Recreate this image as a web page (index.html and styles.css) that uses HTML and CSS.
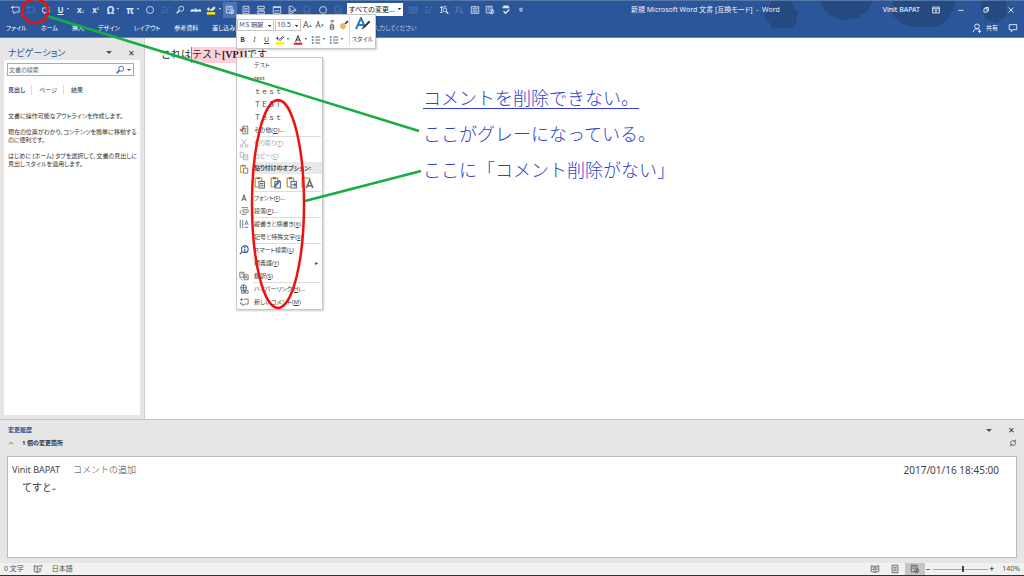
FILE: index.html
```html
<!DOCTYPE html>
<html lang="ja">
<head>
<meta charset="utf-8">
<title>新規 Microsoft Word 文書 [互換モード] - Word</title>
<link rel="stylesheet" href="styles.css">
</head>
<body>
<svg class="defs" aria-hidden="true">
  <symbol id="bubble" viewBox="0 0 12 12"><path d="M4 2.500h7v6H7L5 10.500V8.500H3.500V6M1 3h4M3 1v4"/></symbol>
  <symbol id="bubble-next" viewBox="0 0 12 12"><path d="M8 3.500H2v5h2v2l2-2h4V6M7 1.500l3 2-3 2"/></symbol>
  <symbol id="circle" viewBox="0 0 12 12"><circle cx="6" cy="6" r="4.200"/></symbol>
  <symbol id="lens" viewBox="0 0 12 12"><circle cx="7.500" cy="4.500" r="3"/><path d="M5.300 6.700L2 10" stroke-width="1.800"/></symbol>
  <symbol id="strike" viewBox="0 0 12 12"><path d="M2 3h4M2 6h3M2 9h3M5 10l6-8M7 8l3 2"/></symbol>
  <symbol id="page" viewBox="0 0 12 12"><path d="M2.500 1.500h7v9h-7zM4 4h4M4 6h4M4 8h4"/></symbol>
  <symbol id="rows" viewBox="0 0 12 12"><path d="M2 1.500h8v3H2zM2 7.500h8v3H2zM2 6h8"/></symbol>
  <symbol id="window" viewBox="0 0 12 12"><path d="M1.500 2h9v8h-9zM1.500 3h9M3 7h6"/></symbol>
  <symbol id="edit-page" viewBox="0 0 12 12"><path d="M7 10.500H2.500v-9H6l3 3M5 8l5-3 1 1-4 3zM4 4v4"/></symbol>
  <symbol id="check-page" viewBox="0 0 12 12"><path d="M2.500 1.500H7l2.500 2v7h-7zM4 7l2 2 3-4"/></symbol>
  <symbol id="review" viewBox="0 0 12 12"><path d="M1.500 1.500h7v8h-7zM3 3.500h4M3 5.500h2"/><circle cx="8" cy="8" r="2.500"/><path d="M8 6.500v3"/></symbol>
  <symbol id="book" viewBox="0 0 12 12"><path d="M6 3v7M6 3L1.500 2v7L6 10l4.500-1V2zM3 4.500l2 .5M3 6.500l2 .5M7 5l2-.5M7 7l2-.5"/></symbol>
  <symbol id="find-page" viewBox="0 0 12 12"><path d="M1 3h4M3 1v8M1 9h3M5 2h4"/><circle cx="7" cy="6" r="2.300"/><path d="M8.700 7.700L11 10.500" stroke-width="1.600"/></symbol>
  <symbol id="columns" viewBox="0 0 12 12"><path d="M1.500 2h9v8h-9zM6 2v8M3 4h2M3 6h2M3 8h2M7 4h2M7 6h2M7 8h2"/></symbol>
  <symbol id="abc-check" viewBox="0 0 12 12"><path d="M2 3h8M3 1.500h6" stroke-width="1.600"/><path d="M3 7.500l2.500 2.500L10 5.500" stroke-width="1.600"/></symbol>
  <symbol id="clipboard" viewBox="0 0 12 12"><path d="M4.500 10H2V2h6v2.500" stroke="#d59a40" stroke-width="1.300"/><path d="M3.500 1h3v2h-3z" fill="#8a744c" stroke="none"/><path d="M5.500 5h5v6h-5z" fill="#fff"/></symbol>
  <symbol id="copy" viewBox="0 0 12 12"><path d="M1.500 1.500h4v6h-4zM5.500 4.500h5v6h-5zM7 6.500h2M7 8.500h2"/></symbol>
  <symbol id="list" viewBox="0 0 12 12"><path d="M1 2.500h2M1 6h2M1 9.500h2" stroke="#2b6cb3" stroke-width="1.800"/><path d="M5 2.500h6M5 6h6M5 9.500h6"/></symbol>
</svg>

<div class="app">
  <header class="header">
    <svg class="header-art" viewBox="0 0 270 28" aria-hidden="true">
      <path d="M12 0h19l3 7 4 3-2 13-4 4H12L9 21l-4-2V10l5-6zM60 0h52l-3 9-12 8-15 2-8-3-9-6zM133 0h63l-2 8-7 11-10 7h-25l-10-3-2-3-7-5zM221 0h25v8l1 6-10 8-11-4-5-10z"/>
    </svg>
    <div class="titlebar">
      <div class="quick">
        <button aria-label="コメント"><svg><use href="#bubble"/></svg></button>
        <button class="off" aria-label="コメントの削除" disabled><svg><use href="#bubble"/></svg></button>
        <button aria-label="次のコメント"><svg><use href="#bubble-next"/></svg></button>
        <button class="drop"><u><b>U</b></u></button>
        <button><b>x</b><sub>₂</sub></button>
        <button><b>x</b><sup>²</sup></button>
        <button class="drop big">Ω</button>
        <button class="drop big">π</button>
        <button aria-label="円"><svg><use href="#circle"/></svg></button>
        <button class="off" aria-label="書式" disabled><svg><use href="#strike"/></svg></button>
        <button aria-label="検索"><svg><use href="#lens"/></svg></button>
        <button class="abc"><s>abc</s></button>
        <button class="drop" aria-label="蛍光ペン"><svg viewBox="0 0 12 12"><path d="M1 5h4M3 3v4M5 7l5-5M7 7l4-4" stroke-width="1.500"/><path d="M1 10h10" stroke="#ffe900" stroke-width="3"/></svg></button>
        <button class="picked" aria-label="変更履歴"><svg><use href="#review"/></svg></button>
        <button aria-label="ページ"><svg><use href="#page"/></svg></button>
        <button aria-label="分割"><svg><use href="#rows"/></svg></button>
        <button aria-label="ウィンドウ"><svg><use href="#window"/></svg></button>
        <button aria-label="編集"><svg><use href="#edit-page"/></svg></button>
        <button class="off" aria-label="承諾" disabled><svg><use href="#check-page"/></svg></button>
        <button aria-label="図形"><svg><use href="#circle"/></svg></button>
        <button class="off" aria-label="元に戻す" disabled><svg><use href="#check-page"/></svg></button>
      </div>
      <select class="markup" aria-label="変更内容の表示"><option>すべての変更…</option></select>
      <div class="quick quick-end">
        <button class="off" aria-label="閲覧" disabled><svg><use href="#book"/></svg></button>
        <button class="off" aria-label="校正" disabled><svg><use href="#strike"/></svg></button>
        <button aria-label="文書内検索"><svg><use href="#find-page"/></svg></button>
        <button class="off" aria-label="置換" disabled><svg><use href="#find-page"/></svg></button>
        <button aria-label="段組み"><svg><use href="#columns"/></svg></button>
        <button aria-label="ロック"><svg><use href="#review"/></svg></button>
        <button aria-label="スペルチェック"><svg><use href="#abc-check"/></svg></button>
        <button aria-label="その他"><svg viewBox="0 0 12 12"><path d="M4 4h4M4 6h4L6 8z"/></svg></button>
      </div>
      <h1 class="doc-title">新規 Microsoft Word 文書 [互換モード]&nbsp; -&nbsp; Word</h1>
      <div class="window-area">
        <span class="user">Vinit BAPAT</span>
        <button aria-label="リボン"><svg viewBox="0 0 12 12"><path d="M2 2.500h8v7H2zM2 4.500h8M6 9V6M4.800 7L6 5.800 7.200 7"/></svg></button>
        <button aria-label="最小化"><svg viewBox="0 0 12 12"><path d="M3 6.500h6"/></svg></button>
        <button aria-label="元に戻す"><svg viewBox="0 0 12 12"><path d="M3.500 4.500h4v4h-4zM5 4V3h4v4H8"/></svg></button>
        <button aria-label="閉じる"><svg viewBox="0 0 12 12"><path d="M3 3l6 6M9 3l-6 6"/></svg></button>
      </div>
    </div>
    <nav class="tabs">
      <a href="#">ファイル</a><a href="#">ホーム</a><a href="#">挿入</a><a href="#">デザイン</a><a href="#">レイアウト</a><a href="#">参考資料</a><a href="#">差し込み文書</a>
      <span class="tell">実行したい作業を入力してください</span>
      <span class="share">
        <a href="#"><svg viewBox="0 0 12 12"><circle cx="6" cy="4" r="2.800"/><path d="M1.500 11c0-3 2-4 4.500-4 1.500 0 2.500.500 3 1M9 8v4M7 10h4"/></svg>共有</a>
        <button aria-label="コメント"><svg viewBox="0 0 12 12"><path d="M1.500 2h9v6H6l-2 2.500V8H1.500z"/></svg></button>
      </span>
    </nav>
  </header>

  <main class="workspace">
    <aside class="nav">
      <div class="nav-head"><h2>ナビゲーション</h2><button class="tri" aria-label="オプション"></button><button class="x" aria-label="閉じる">✕</button></div>
      <div class="nav-body">
        <div class="search"><input type="text" placeholder="文書の検索" aria-label="文書の検索"><svg><use href="#lens"/></svg><i class="tri"></i></div>
        <div class="nav-tabs"><a class="current" href="#">見出し</a><a href="#">ページ</a><a href="#">結果</a></div>
        <p>文書に操作可能なアウトラインを作成します。</p>
        <p>現在の位置がわかり、コンテンツを簡単に移動する<br>のに便利です。</p>
        <p>はじめに [ホーム] タブを選択して、文書の見出しに<br>見出しスタイルを適用します。</p>
      </div>
    </aside>
    <article class="document">
      <p>これは<mark>テスト<b>[VP1]</b></mark>です</p>
    </article>
  </main>

  <section class="revisions">
    <div class="rev-head"><h2>変更履歴</h2><button class="tri" aria-label="オプション"></button><button class="x" aria-label="閉じる">✕</button></div>
    <div class="rev-sub"><svg viewBox="0 0 12 12"><path d="M3 8l3-3 3 3"/></svg><b>1 個の変更箇所</b>
      <button aria-label="更新"><svg viewBox="0 0 12 12"><path d="M2.500 7V4.500C4 2 7 2 9 3.500M9.500 1v3H7M9.500 5v3C8 10 5 10 3 8.500M2.500 11V8H5"/></svg></button></div>
    <div class="rev-list">
      <div class="rev-row"><span>Vinit BAPAT</span><span class="action">コメントの追加</span><time>2017/01/16 18:45:00</time></div>
      <p>てすと<small>↵</small></p>
    </div>
  </section>

  <footer class="status">
    <span>0 文字</span>
    <svg viewBox="0 0 12 12"><path d="M5 3v7M5 3L1.500 2v7L5 10l4-1M5 3l4-1h1.500v2M7 5l3 3M10 5L7 8"/></svg>
    <span>日本語</span>
    <div class="views">
      <button aria-label="閲覧モード"><svg><use href="#book"/></svg></button>
      <button aria-label="印刷レイアウト"><svg><use href="#page"/></svg></button>
      <button class="on" aria-label="Web レイアウト"><svg><use href="#review"/></svg></button>
    </div>
    <div class="zoom"><button aria-label="縮小">−</button><input type="range" min="0" max="100" value="55" aria-label="ズーム"><button aria-label="拡大">+</button></div>
    <span class="percent">140%</span>
  </footer>
</div>

<div class="mini">
  <div class="mini-tools">
    <div class="mini-row">
      <select class="face" aria-label="フォント"><option>ＭＳ 明朝</option></select>
      <select class="size" aria-label="サイズ"><option>10.5</option></select>
      <button class="grow">A<sup>▴</sup></button><button class="shrink">A<sup>▾</sup></button>
      <button aria-label="ルビ"><svg viewBox="0 0 12 12"><path d="M4 1h4L5 4M4 6h4v5H4zM4 8.500h4M6 4.500V6"/></svg></button>
      <button aria-label="書式のコピー"><svg viewBox="0 0 12 12"><path d="M7 4l3-3 1 1-3 3z" fill="#555"/><path d="M2 5l3-1 3 3-2 4-4-2z" fill="#efb65c" stroke="#efb65c"/></svg></button>
    </div>
    <div class="mini-row">
      <button><b>B</b></button><button><i>I</i></button><button><u>U</u></button>
      <button class="drop" aria-label="蛍光ペン"><svg viewBox="0 0 12 12"><path d="M1 4h4M3 2v4M4 7l6-6M6 7l5-5"/><path d="M1 10h10" stroke="#fff000" stroke-width="3"/></svg></button>
      <button class="drop" aria-label="フォントの色"><svg viewBox="0 0 12 12"><path d="M3 8l3-7 3 7M4 6h4" stroke-width="1.300"/><path d="M1 10.500h10" stroke="#e81b23" stroke-width="2.500"/></svg></button>
      <button class="drop" aria-label="箇条書き"><svg><use href="#list"/></svg></button>
      <button class="drop" aria-label="段落番号"><svg><use href="#list"/></svg></button>
    </div>
  </div>
  <button class="styles"><svg viewBox="0 0 18 14"><path d="M2 12L7 1l4 9M4 8h6" stroke="#2b79c2" stroke-width="2"/><path d="M8 12l2-3 5-5 1 1-5 5z" fill="#444"/></svg><span>スタイル</span></button>
</div>

<menu class="context">
  <li><button>テスト</button></li>
  <li><button>test</button></li>
  <li class="wide"><button>ｔｅｓｔ</button></li>
  <li class="wide"><button>ＴＥＳＴ</button></li>
  <li class="wide"><button>Ｔｅｓｔ</button></li>
  <li><button><svg viewBox="0 0 12 12"><path d="M4.500 1.500h6v9h-6zM6 4h3M6 6h3M6 8h3"/><path d="M1 5l2 2 3-4" stroke="#e22b20" stroke-width="1.500"/></svg>その他(<u>O</u>)...</button></li>
  <li class="line"><button disabled><svg viewBox="0 0 12 12"><path d="M3 1l5 7M9 1L4 8"/><circle cx="3" cy="9.500" r="1.500"/><circle cx="9" cy="9.500" r="1.500"/></svg>切り取り(<u>T</u>)</button></li>
  <li><button disabled><svg><use href="#copy"/></svg>コピー(<u>C</u>)</button></li>
  <li class="heading"><svg><use href="#clipboard"/></svg><b>貼り付けのオプション:</b></li>
  <li class="paste">
    <button aria-label="元の書式を保持"><svg viewBox="0 0 12 12"><use href="#clipboard"/><path d="M6.500 7h3M6.500 9h3" stroke="#2b79c2"/></svg></button>
    <button aria-label="書式を結合"><svg viewBox="0 0 12 12"><use href="#clipboard"/><path d="M5 10l5-6" stroke="#2b79c2" stroke-width="2"/></svg></button>
    <button aria-label="リンク"><svg viewBox="0 0 12 12"><use href="#clipboard"/><path d="M6 8h4M8.500 6.500L10 8l-1.500 1.500" stroke="#2b79c2"/></svg></button>
    <button aria-label="テキストのみ"><svg viewBox="0 0 12 12"><path d="M4 10H1V2h7v2" stroke="#d59a40" stroke-width="1.300"/><path d="M5 11l3-7 3 7M6 9h4" stroke-width="1.400"/></svg></button>
  </li>
  <li class="line"><button><svg viewBox="0 0 12 12"><path d="M3.500 9.500l2.500-7 2.500 7M4.500 7.500h3" stroke-width="1.300"/></svg>フォント(<u>F</u>)...</button></li>
  <li><button><svg viewBox="0 0 12 12"><path d="M3 2h8M5 4.500h6v3H5zM3 10h6M3 5L1 7l2 2"/></svg>段落(<u>P</u>)...</button></li>
  <li class="line"><button><svg viewBox="0 0 12 12"><path d="M1.500 1v10M4.500 1v10M7 10h4"/><path d="M7 7l2-5 2 5M8 6h2" stroke="#2b79c2"/></svg>縦書きと横書き(<u>X</u>)...</button></li>
  <li><button>記号と特殊文字(<u>S</u>)</button></li>
  <li class="line"><button><svg viewBox="0 0 12 12"><circle cx="7" cy="5" r="4" stroke="#2b579a" stroke-width="1.300"/><path d="M4 8l-3 3M7 4.500V8M7 2.500v1" stroke="#2b579a" stroke-width="1.500"/></svg>スマート検索(<u>L</u>)</button></li>
  <li><button>類義語(<u>Y</u>)<span class="sub">▸</span></button></li>
  <li><button><svg viewBox="0 0 12 12"><path d="M1 1.500h5v6H1zM2.500 3.500H5M6 4.500h5v6H6zM7 9l1.500-3L10 9M2 9l2 2"/></svg>翻訳(<u>S</u>)</button></li>
  <li class="line"><button><svg viewBox="0 0 12 12"><circle cx="5.500" cy="4.500" r="3.500" stroke="#2b579a"/><path d="M2 4.500h7M5.500 1v7" stroke="#2b579a"/><path d="M3 8h3v3H3zM7 8h4v3H7zM5 9.500h4"/></svg>ハイパーリンク(<u>H</u>)...</button></li>
  <li><button><svg viewBox="0 0 12 12"><path d="M6 2.500h5v6H7l-2 2v-2H2V6"/><path d="M1 3h4M3 1v4" stroke="#2a9955"/></svg>新しいコメント(<u>M</u>)</button></li>
</menu>

<div class="notes">
  <svg viewBox="0 0 700 320" aria-hidden="true">
    <path class="green" d="M47 16L419 131M305 201L421 171"/>
    <ellipse class="red" cx="35" cy="11" rx="13" ry="12"/>
    <ellipse class="red" cx="278" cy="204" rx="26" ry="104"/>
  </svg>
  <div class="note-text">
    <p><u>コメントを削除できない。</u></p>
    <p>ここがグレーになっている。</p>
    <p>ここに「コメント削除がない」</p>
  </div>
</div>
</body>
</html>
```

FILE: styles.css
```css
* { box-sizing: border-box; }
body, p, h1, h2, menu { margin: 0; padding: 0; }
body {
  font-family: "Noto Sans", "Noto Sans CJK JP", sans-serif;
  font-size: 7px;
  line-height: 8px;
  color: #333;
  position: relative;
}
button, input, select {
  font: inherit;
  color: inherit;
  border: 0;
  margin: 0;
  padding: 0;
  background: none;
  appearance: none;
  white-space: nowrap;
}
a { color: inherit; text-decoration: none; }
h1, h2 { font-size: inherit; font-weight: normal; }
svg { width: 10px; height: 10px; fill: none; stroke: currentColor; flex: none; display: block; }
.defs { position: absolute; width: 0; height: 0; }
.app { display: flex; flex-direction: column; min-height: 100vh; border-bottom: 1px solid #333; }

.header { position: relative; background: #2b579a; color: #fff; border-top: 1px solid #5577a8; border-bottom: 1px solid #6685b5; }
.header-art { position: absolute; top: 0; right: -6px; width: 270px; height: 28px; fill: #244a80; stroke: none; }
.titlebar { position: relative; display: flex; align-items: center; height: 17px; padding: 0 8px; }
.quick { display: flex; justify-content: space-between; width: 337px; color: #dde6f3; }
.quick-end { width: 122px; margin-left: 3px; }
.quick button { display: flex; align-items: center; justify-content: center; width: 14px; height: 16px; font-size: 8px; }
.quick sub, .quick sup { font-size: 6px; line-height: 6px; }
.quick .big { font-size: 10px; font-weight: bold; }
.quick .abc { font-size: 6px; font-weight: bold; }
.quick .drop { width: 18px; }
.drop::after { content: ""; border: 1px solid transparent; border-top: 2px solid; margin-left: 3px; }
.quick .off { color: #5376ad; }
.quick .picked { background: #4a74b3; }
.markup { width: 56px; height: 13px; margin-left: 2px; background: #fff; color: #222; font-size: 7px; padding: 0 2px; font-feature-settings: "palt"; }
.markup, .face, .size {
  background-image: linear-gradient(#444, #444), linear-gradient(#444, #444);
  background-repeat: no-repeat;
  background-size: 3px 1px, 1px 1px;
  background-position: right 2px top 5px, right 3px top 6px;
}
.doc-title { flex: 1; text-align: center; font-size: 7px; color: #eef2f8; font-feature-settings: "palt"; }
.window-area { display: flex; align-items: center; gap: 15px; }
.window-area button { width: 10px; }
.user { font-size: 7px; margin-right: -4px; }
.tabs { position: relative; display: flex; align-items: center; height: 19px; padding: 0 6px; gap: 14px; font-feature-settings: "palt"; font-size: 6px; }
.tell { margin-left: 66px; color: #bfcce2; }
.share { display: flex; align-items: center; gap: 10px; margin-left: auto; }
.share a { display: flex; align-items: center; gap: 4px; }

.workspace { flex: 1; display: flex; background: #e6e6e6; }
.nav { width: 145px; padding: 0 4px; display: flex; flex-direction: column; border-right: 1px solid #cfcfcf; padding-bottom: 4px; }
.nav-head { display: flex; align-items: center; height: 22px; padding: 7px 5px 0 4px; }
.nav-head h2 { flex: 1; font-size: 9px; line-height: 14px; color: #2b579a; font-feature-settings: "palt"; }
.tri { width: 0; height: 0; border: 3px solid transparent; border-top-color: #555; border-bottom: 0; }
.x { font-size: 8px; margin-left: 16px; }
.nav-body { flex: 1; background: #fff; padding: 3px 3px; font-size: 6px; font-feature-settings: "palt"; }
.search { display: flex; align-items: center; height: 13px; margin-right: 3px; border: 1px solid #ababab; padding: 0 2px 0 1px; color: #2b579a; gap: 2px; }
.search input { flex: 1; min-width: 0; }
.search input::placeholder { color: #666; opacity: 1; }
.search .tri { border-width: 2px; border-bottom: 0; }
.nav-tabs { display: flex; margin: 9px 0 17px 1px; line-height: 10px; }
.nav-tabs a { padding-right: 6px; border-right: 1px solid #ddd; }
.nav-tabs a + a { padding-left: 7px; }
.nav-tabs a:last-child { border: 0; }
.nav-tabs .current { color: #2b579a; font-weight: bold; }
.nav-body p { margin: 0 0 8px 1px; white-space: nowrap; }
.document { flex: 1; background: #fff; padding: 9px 16px; color: #222; font-family: "Liberation Serif", "Noto Sans CJK JP", serif; font-size: 10px; line-height: 16px; }
mark { background: #ffd0dc; color: inherit; display: inline-block; border-left: 1px solid #e05a78; }

.revisions { background: #e6e6e6; border-top: 1px solid #c6c6c6; padding: 4px 7px 5px; }
.rev-head, .rev-sub { display: flex; align-items: center; height: 12px; padding: 0 2px 0 1px; }
.rev-head h2 { flex: 1; color: #2b579a; font-weight: bold; font-size: 6px; }
.rev-sub { height: 14px; margin-bottom: 6px; padding-left: 0; padding-right: 0; font-size: 6px; }
.rev-sub b { margin-left: 7px; }
.rev-sub svg { width: 8px; height: 8px; }
.rev-sub button { margin-left: auto; }
.rev-list { background: #fff; border: 1px solid #bbb; height: 102px; padding: 6px 17px 0 4px; }
.rev-row { display: flex; font-size: 9px; line-height: 14px; color: #444; }
.rev-row .action { margin-left: 13px; font-weight: 300; }
.rev-row time { margin-left: auto; font-size: 10px; }
.rev-list p { padding: 3px 10px; font-size: 10px; line-height: 14px; }
.rev-list small { font-size: 5px; }

.status { display: flex; align-items: center; height: 12px; background: #f1f1f1; padding: 0 4px; font-size: 7px; color: #555; gap: 9px; }
.views { display: flex; margin-left: auto; }
.views button { display: flex; align-items: center; justify-content: center; width: 20px; height: 12px; }
.views .on { background: #c6c6c6; }
.zoom { display: flex; align-items: center; margin-left: -8px; gap: 2px; font-weight: bold; font-size: 8px; }
.zoom input { width: 55px; height: 8px; background: linear-gradient(#aaa, #aaa) center / 100% 1px no-repeat; }
.zoom input::-webkit-slider-thumb { appearance: none; width: 2px; height: 6px; background: #444; }
.percent { font-size: 7px; margin-left: -1px; }

.mini { position: absolute; left: 236px; top: 14px; display: flex; width: 140px; height: 35px; background: #fff; border: 1px solid #c6c6c6; box-shadow: 1px 1px 2px #0003; color: #444; }
.mini-tools { flex: 1; border-right: 1px solid #ddd; margin: 2px 0; }
.mini-row { display: flex; align-items: center; height: 15px; gap: 1px; }
.mini-row button { display: flex; align-items: center; justify-content: center; width: 11px; font-size: 7px; }
.mini-row .drop { width: 17px; }
.mini .drop::after { margin-left: 2px; }
.mini sup { font-size: 5px; color: #2b79c2; }
.mini .grow { font-size: 9px; }
.mini .shrink { font-size: 8px; }
.face, .size { height: 12px; border: 1px solid #c6c6c6; font-size: 6px; padding-left: 1px; }
.face { width: 37px; font-feature-settings: "palt"; }
.size { width: 26px; font-size: 7px; }
.styles { display: flex; flex-direction: column; align-items: center; justify-content: space-between; width: 26px; padding: 2px 0 5px; font-size: 6px; font-feature-settings: "palt"; }
.styles svg { width: 18px; height: 14px; }

.context { position: absolute; left: 236px; top: 57px; width: 87px; padding-bottom: 1px; list-style: none; background: #fff; border: 1px solid #c6c6c6; box-shadow: 1px 1px 2px #0003; font-size: 6px; color: #444; font-feature-settings: "palt"; }
.context li { height: 13px; padding-left: 17px; position: relative; }
.context li > button { height: 13px; width: 100%; text-align: left; display: flex; align-items: center; }
.context li > button > svg, .heading svg { position: absolute; left: 2px; top: 2px; color: #666; }
.context button:disabled, .context button:disabled svg { color: #aaa; }
.context .wide { font-family: "Noto Sans CJK JP", sans-serif; font-size: 7px; font-feature-settings: "palt" 0; }
.line::before { content: ""; position: absolute; left: 16px; right: 1px; top: 0; border-top: 1px solid #ddd; }
.context .heading { height: 12px; line-height: 12px; background: linear-gradient(#e8e8e8, #e8e8e8) 16px 0 no-repeat; white-space: nowrap; }
.context .paste { height: 17px; padding-left: 16px; display: flex; gap: 3px; align-items: center; }
.context .paste button { width: 13px; height: 13px; }
.context .paste svg { position: static; width: 13px; height: 13px; }
.sub { margin-left: auto; padding-right: 4px; }

.notes { position: absolute; left: 0; top: 0; width: 700px; pointer-events: none; }
.notes > svg { width: 700px; height: 320px; }
.green { stroke: #16ad44; stroke-width: 2.500; }
.red { stroke: #ee1111; stroke-width: 2.500; }
.note-text { position: absolute; left: 423px; top: 79px; color: #3040cc; font-size: 18px; line-height: 36px; font-family: "Noto Sans CJK JP", sans-serif; font-weight: 300; white-space: nowrap; }
.note-text u { text-decoration-thickness: 1px; text-underline-offset: 3px; }
```
